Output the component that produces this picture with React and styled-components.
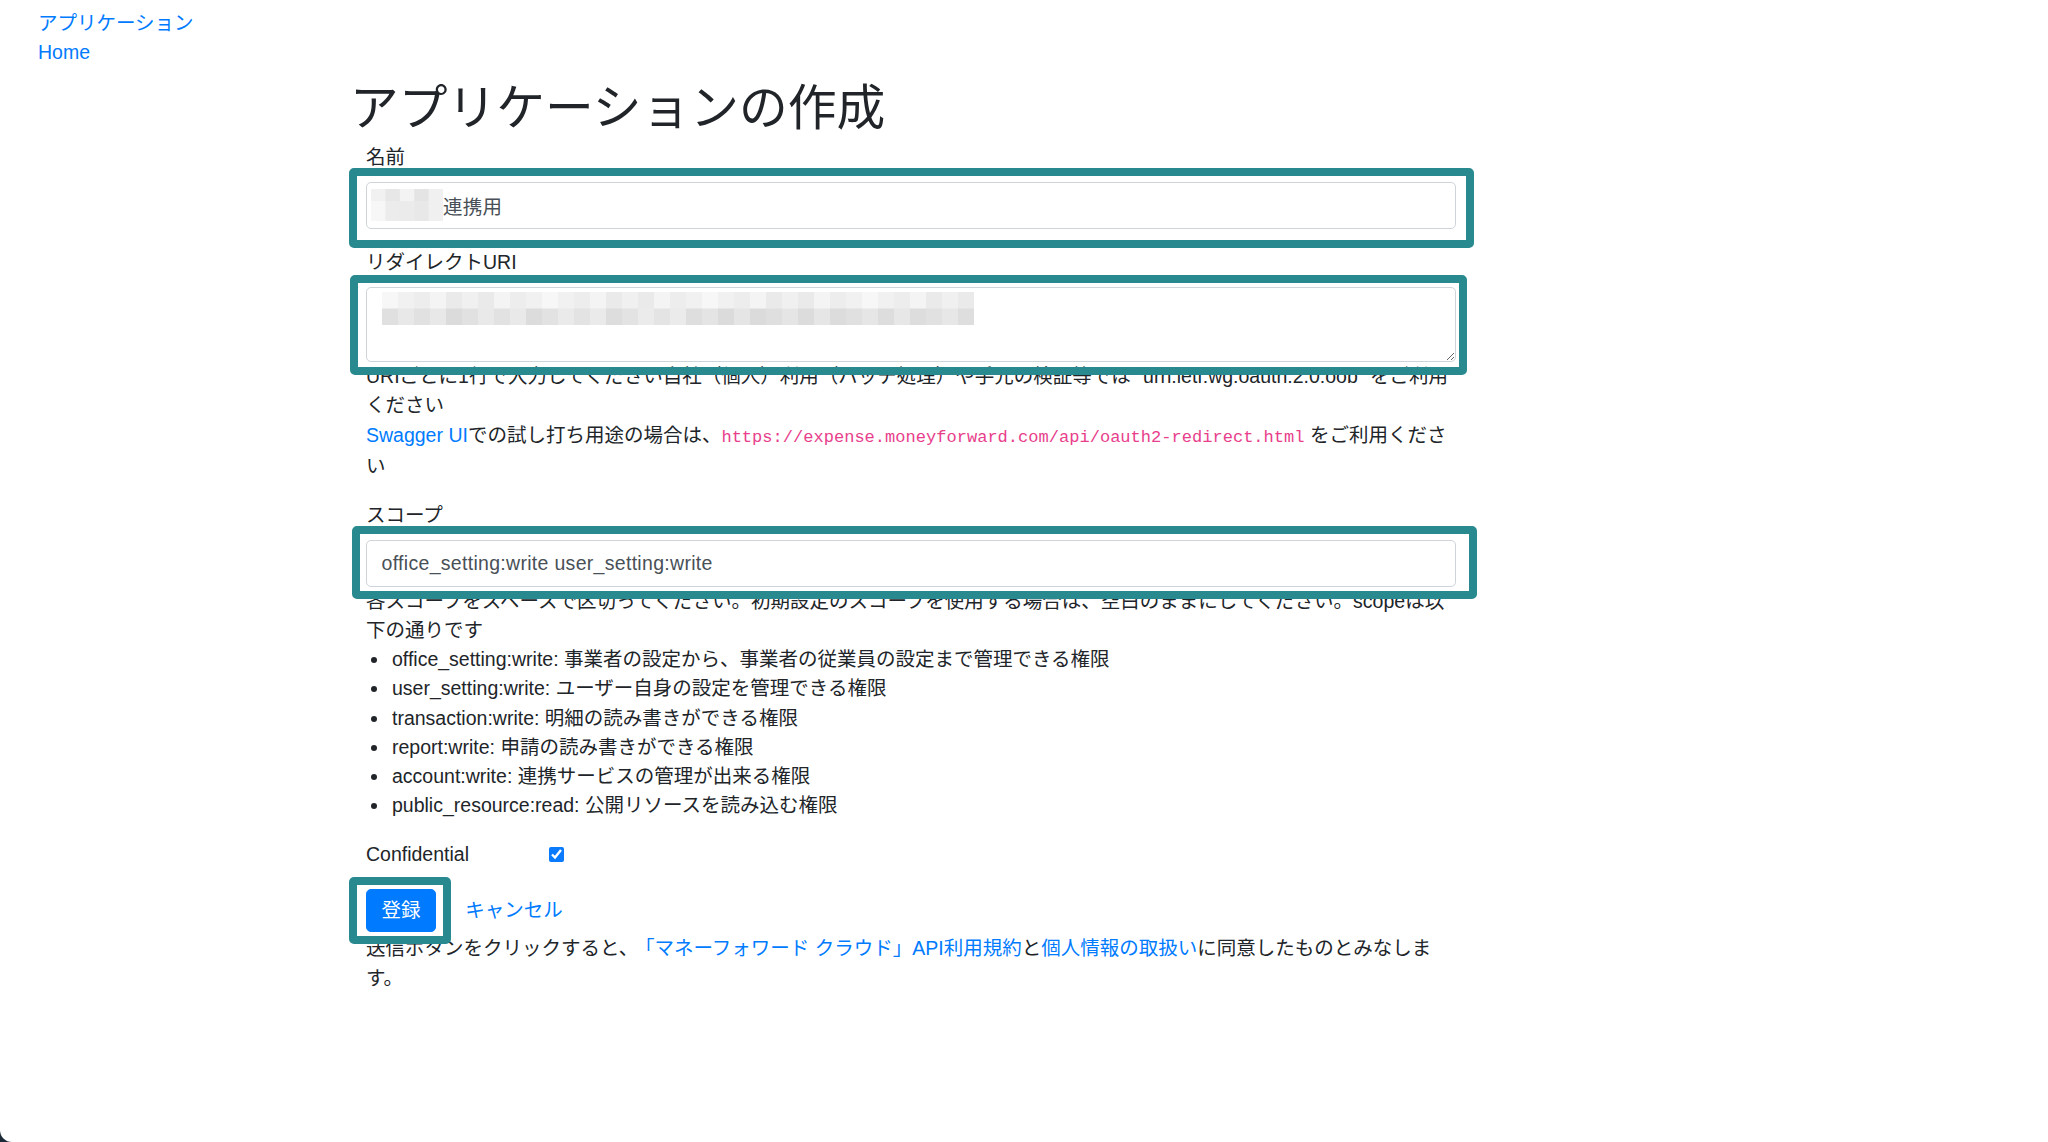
import React from 'react';
import styled, { createGlobalStyle } from 'styled-components';

// Bootstrap-ish form page, everything scaled by ~1.22 (1rem = 19.5px)
const GlobalStyle = createGlobalStyle`
  html, body {
    margin: 0;
    padding: 0;
    background: #1c2a38;
  }
  body {
    font-family: "Liberation Sans", "Noto Sans CJK JP", sans-serif;
    font-size: 19.5px;
    line-height: 29.25px;
    color: #212529;
  }
  * {
    box-sizing: border-box;
  }
`;

const Page = styled.div`
  min-height: 100vh;
  background: #fff;
  border-bottom-left-radius: 12px;
  padding: 8.6px 0 40px;
`;

const Nav = styled.nav`
  padding-left: 38px;
`;

const Link = styled.a`
  color: #007bff;
  text-decoration: none;
  cursor: pointer;
  margin-left: ${(p) => p.$ml || 0}px;
`;

const NavLink = styled(Link)`
  display: block;
`;

const Main = styled.main`
  margin-left: 350px;
  width: 1130px;
`;

const Title = styled.h1`
  font-family: "Noto Sans CJK JP", sans-serif;
  font-size: 48.75px;
  line-height: 58.5px;
  font-weight: 400;
  margin: 7.5px 0 9.75px;
`;

const Form = styled.form`
  padding-left: 16px;
  width: 1106px;
`;

const Group = styled.div`
  margin-top: ${(p) => p.$mt || 0}px;
  margin-bottom: ${(p) => (p.$mb !== undefined ? p.$mb : 19.5)}px;
`;

const Label = styled.label`
  display: block;
  margin-bottom: 9.75px;
`;

const Field = styled.div`
  position: relative;
  display: ${(p) => (p.$inline ? 'inline-block' : 'block')};
`;

const controlStyles = `
  display: block;
  width: 100%;
  padding: 7.3px 14.6px;
  font: inherit;
  color: #495057;
  background: #fff;
  border: 1px solid #ced4da;
  border-radius: 4.9px;
  outline: none;
`;

const Input = styled.input`
  ${controlStyles}
  height: 46.9px;
  padding-left: ${(p) => p.$indent || 14.6}px;
  letter-spacing: 0.3px;
`;

const TextArea = styled.textarea`
  ${controlStyles}
  height: 75px;
  resize: vertical;
`;

const HelpText = styled.div`
  margin-top: ${(p) => p.$mt || 0}px;
`;

const Code = styled.code`
  font-family: "Liberation Mono", monospace;
  font-size: 17.06px;
  color: #e83e8c;
`;

const ScopeList = styled.ul`
  margin: 0 0 19.5px;
  padding-left: 26px;
  list-style: none;
`;

const ScopeItem = styled.li`
  position: relative;

  &::before {
    content: '';
    position: absolute;
    left: -21px;
    top: 12px;
    width: 6px;
    height: 6px;
    border-radius: 50%;
    background: #212529;
  }
`;

const CheckRow = styled.div`
  display: flex;
  align-items: center;
  margin-bottom: 19.5px;
`;

const CheckLabel = styled.label`
  width: 183px;
`;

const Checkbox = styled.input`
  width: 15px;
  height: 15px;
  margin: 0;
  accent-color: #0a7aff;
`;

const ActionRow = styled.div`
  display: flex;
  align-items: center;
  gap: 29px;
`;

const SubmitButton = styled.button`
  display: block;
  height: 43.5px;
  padding: 0 14.6px;
  font: inherit;
  color: #fff;
  background: #007bff;
  border: 1px solid #007bff;
  border-radius: 4.9px;
`;

// teal annotation frame drawn over a control
const Highlight = styled.div`
  position: absolute;
  top: ${(p) => p.$t}px;
  right: ${(p) => p.$r}px;
  bottom: ${(p) => p.$b}px;
  left: ${(p) => p.$l}px;
  border: 8px solid #288a8e;
  border-radius: 5px;
  pointer-events: none;
  z-index: 2;
`;

const MosaicSpot = styled.div`
  position: absolute;
  left: ${(p) => p.$x}px;
  top: ${(p) => p.$y}px;
  line-height: 0;
  pointer-events: none;
`;

// pixelated blur over hidden values
const Mosaic = ({ cols, rows, cellW, x, y }) => {
  const total = rows.reduce((a, r) => a + r.h, 0);
  let offset = 0;
  return (
    <MosaicSpot $x={x} $y={y}>
      <svg width={cols * cellW} height={total}>
        {rows.map((row, ri) => {
          const top = offset;
          offset += row.h;
          return row.values.map((v, ci) => (
            <rect
              key={`${ri}-${ci}`}
              x={ci * cellW}
              y={top}
              width={cellW + 0.5}
              height={row.h + 0.5}
              fill={`rgb(${v},${v},${v})`}
            />
          ));
        })}
      </svg>
    </MosaicSpot>
  );
};

const spread = (n, base, range, seed) =>
  Array.from({ length: n }, (_, i) => base + ((i * 7 + seed * 13 + (i * i) % 5) % range));

const nameRows = [
  { h: 12, values: [241, 231, 243, 228, 240] },
  { h: 20, values: [247, 236, 235, 232, 240] },
];

const uriRows = [
  { h: 16.5, values: spread(37, 234, 14, 1) },
  { h: 16.5, values: spread(37, 219, 17, 3) },
];

const scopes = [
  ['office_setting:write', '事業者の設定から、事業者の従業員の設定まで管理できる権限'],
  ['user_setting:write', 'ユーザー自身の設定を管理できる権限'],
  ['transaction:write', '明細の読み書きができる権限'],
  ['report:write', '申請の読み書きができる権限'],
  ['account:write', '連携サービスの管理が出来る権限'],
  ['public_resource:read', '公開リソースを読み込む権限'],
];

const App = () => {
  return (
    <Page>
      <GlobalStyle />
      <Nav>
        <NavLink>アプリケーション</NavLink>
        <NavLink>Home</NavLink>
      </Nav>

      <Main>
        <Title>アプリケーションの作成</Title>

        <Form onSubmit={(e) => e.preventDefault()}>
          <Group>
            <Label>名前</Label>
            <Field>
              <Input readOnly value="連携用" $indent={76} />
              <Mosaic cols={5} cellW={14.4} rows={nameRows} x={5} y={7} />
              <Highlight $t={-14} $r={-18} $b={-19} $l={-17} />
            </Field>
          </Group>

          <Group $mb={0}>
            <Label>リダイレクトURI</Label>
            <Field>
              <TextArea readOnly rows={2} value="" />
              <Mosaic cols={37} cellW={16} rows={uriRows} x={16} y={5} />
              <Highlight $t={-12} $r={-11} $b={-13} $l={-16} />
            </Field>
            <HelpText>
              URIごとに1行で入力してください自社（個人）利用（バッチ処理）や手元の検証等では
              "urn:ietf:wg:oauth:2.0:oob" をご利用ください
            </HelpText>
            <HelpText>
              <Link>Swagger UI</Link>での試し打ち用途の場合は、
              <Code>https://expense.moneyforward.com/api/oauth2-redirect.html</Code> をご利用ください
            </HelpText>
          </Group>

          <Group $mb={0} $mt={19.5}>
            <Label>スコープ</Label>
            <Field>
              <Input readOnly value="office_setting:write user_setting:write" />
              <Highlight $t={-14} $r={-21} $b={-12} $l={-14} />
            </Field>
            <HelpText>
              各スコープをスペースで区切ってください。初期設定のスコープを使用する場合は、空白のままにしてください。scopeは以下の通りです
            </HelpText>
            <ScopeList>
              {scopes.map(([name, desc]) => (
                <ScopeItem key={name}>
                  {name}: {desc}
                </ScopeItem>
              ))}
            </ScopeList>
          </Group>

          <CheckRow>
            <CheckLabel htmlFor="confidential">Confidential</CheckLabel>
            <Checkbox id="confidential" type="checkbox" defaultChecked />
          </CheckRow>

          <ActionRow>
            <Field $inline>
              <SubmitButton type="submit">登録</SubmitButton>
              <Highlight $t={-12} $r={-15} $b={-12} $l={-17} />
            </Field>
            <Link>キャンセル</Link>
          </ActionRow>

          <HelpText $mt={2}>
            送信ボタンをクリックすると、<Link $ml={6.5}>「マネーフォワード クラウド」API利用規約</Link>と
            <Link>個人情報の取扱い</Link>に同意したものとみなします。
          </HelpText>
        </Form>
      </Main>
    </Page>
  );
};

export default App;
